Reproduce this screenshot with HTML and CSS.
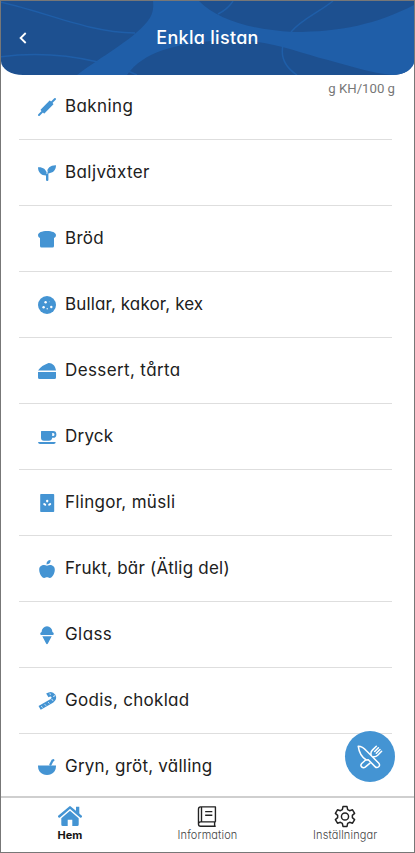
FILE: index.html
```html
<!DOCTYPE html>
<html lang="sv">
<head>
<meta charset="utf-8">
<title>Enkla listan</title>
<link rel="stylesheet" href="styles.css">
</head>
<body>
<div class="app">
  <header class="header">
    <svg class="header-art" viewBox="0 0 413 74" preserveAspectRatio="none" aria-hidden="true">
      <rect width="413" height="74" fill="#1d5090"/>
      <path d="M152 0C153 9 151 15 146 21C130 40 101 55 76 74H126C143 50 174 44 210 40C261 35 292 50 327 59C348 65 371 72 391 74H413V4C376 23 340 31 292 31C248 28 217 19 198 0Z" fill="#1f5ea8"/>
      <path d="M0 1C47 11 86 31 135 32M0 56C36 51 72 55 98 61M128 70L137 74M233 0Q228 8 218 13M333 0C318 12 302 18 291 31M283 44Q279 62 297 74" transform="translate(-1 0)" fill="none" stroke="#1f5ea8" stroke-width="1.5"/>
    </svg>
    <svg class="back" viewBox="0 0 8 12"><path d="M6.7 1L1.6 6L6.7 11" fill="none" stroke="#fff" stroke-width="1.8"/></svg>
    <h1 class="title">Enkla listan</h1>
  </header>
  <main class="list-wrap">
    <span class="unit">g KH/100 g</span>
    <ul class="list">
      <li class="row"><svg class="icon" viewBox="0 0 18 18"><path d="M1 17L17 1" stroke="#4494d3" stroke-width="2" stroke-linecap="round"/><path d="M3.2 11.8L11.8 3.2L14.8 6.2L6.2 14.8Z" stroke="#4494d3" stroke-width="1.2" stroke-linejoin="round"/></svg><span class="label bakning">Bakning</span></li>
      <li class="row"><svg class="icon" viewBox="0 0 18 18"><path d="M0 3.2C5 2.9 8 5.2 8.7 9C9.2 4 12.5 1.1 18 1.3C18 6.2 15.2 9 10.4 9.4V16Q10.4 17 9.2 17Q8 17 8 16V11.5C3.2 11.3 0 8.3 0 3.2Z"/><path d="M8.8 10L9.7 6.5" stroke="#fff" stroke-width=".7"/></svg><span class="label baljvaxter">Baljväxter</span></li>
      <li class="row"><svg class="icon" viewBox="0 0 18 18"><path d="M9 1C14 1 18 2.6 18 5.2Q18 7.4 16 8V16Q16 17.5 14.5 17.5H3.5Q2 17.5 2 16V8Q0 7.4 0 5.2C0 2.6 4 1 9 1Z"/></svg><span class="label brod">Bröd</span></li>
      <li class="row"><svg class="icon" viewBox="0 0 18 18"><circle cx="9" cy="9" r="9"/><g fill="#fff"><circle cx="7.6" cy="6.2" r="1.2"/><circle cx="5.6" cy="11.2" r="1.2"/><circle cx="13.3" cy="11" r="1.2"/><circle cx="11.2" cy="5.8" r=".4"/><circle cx="9.2" cy="12.7" r=".7"/></g></svg><span class="label bullar">Bullar, kakor, kex</span></li>
      <li class="row"><svg class="icon" viewBox="0 0 18 18"><path d="M0 8.6C2.2 5.2 6 2.6 10.6 1C14 .8 17.6 3.7 18 8.6ZM0 10H18V15.5Q18 17 16.5 17H1.5Q0 17 0 15.5Z"/></svg><span class="label dessert">Dessert, tårta</span></li>
      <li class="row"><svg class="icon" viewBox="0 0 18 18"><path fill-rule="evenodd" d="M3.5 3H15A3.4 3.4 0 0 1 15 9.8H14.2Q13.8 12.8 11 12.8H6Q3 12.8 3 9.8V3.5Q3 3 3.5 3ZM14.2 5V8H15A1.5 1.5 0 0 0 15 5ZM0 14H17.7Q17.6 16 15.8 16H2Q.2 16 0 14Z"/></svg><span class="label dryck">Dryck</span></li>
      <li class="row"><svg class="icon" viewBox="0 0 18 18"><rect x="2.2" y="0" width="14" height="18" rx=".8"/><g fill="#fff"><ellipse cx="9.2" cy="7.1" rx="1.2" ry="1.4"/><ellipse cx="6.7" cy="10.4" rx="1.6" ry="1.1" transform="rotate(30 6.7 10.4)"/><ellipse cx="11.7" cy="10.4" rx="1.6" ry="1.1" transform="rotate(-30 11.7 10.4)"/></g></svg><span class="label flingor">Flingor, müsli</span></li>
      <li class="row"><svg class="icon" viewBox="0 0 18 18"><path d="M9 5.8C12.2 4.1 16.8 5.3 16.8 9.7C16.8 13.3 14.2 18 11.8 18C10.6 18 10.1 17.3 9 17.3S7.4 18 6.2 18C3.8 18 1.2 13.3 1.2 9.7C1.2 5.3 5.8 4.1 9 5.8ZM8.5 4.4C8.4 1.5 10 .1 12.6 0C12.8 2.8 11.3 4.4 8.5 4.4Z"/></svg><span class="label frukt">Frukt, bär (Ätlig del)</span></li>
      <li class="row"><svg class="icon" viewBox="0 0 18 18"><path d="M3.6 6A5.4 5.7 0 0 1 14.4 6Q15.8 6.5 15.8 7.8Q15.8 9 14.5 9H3.5Q2.2 9 2.2 7.8Q2.2 6.5 3.6 6ZM4.3 10.2H13.7L9.9 17.5Q9 19 8.1 17.5Z"/></svg><span class="label glass">Glass</span></li>
      <li class="row"><svg class="icon" viewBox="0 0 18 18"><path d="M1.6 15.9L13.8 8.9Q17 6.7 15.3 3.7Q13.4 .9 9.3 3.4" fill="none" stroke="#4494d3" stroke-width="4.4"/><path d="M3.4 14.2L4.4 15.6M6.8 12.3L7.9 13.6M10.2 10.3L11.4 11.4M13.6 7.6L15.2 8.4M15.2 4.5L17 3.7M12.3 2.8L12 1.4" stroke="#fff" stroke-width=".9"/></svg><span class="label godis">Godis, choklad</span></li>
      <li class="row"><svg class="icon" viewBox="0 0 18 18"><path d="M0 7.5H18V8.3C18 12 16 15 12.8 16.3Q11.3 17 9 17T5.2 16.3C2 15 0 12 0 8.3Z"/><path d="M12.5 6.6L14.5 2.6L15.3 2.2" stroke="#4494d3" stroke-width="2.3" stroke-linecap="round"/></svg><span class="label gryn">Gryn, gröt, välling</span></li>
    </ul>
    <button class="fab" aria-label="Mat"><svg viewBox="0 0 26 24" fill="none" stroke="#fff" stroke-width="1.5" stroke-linejoin="round" stroke-linecap="round"><path d="M1.2 1.2C5 1.3 7.5 3.5 9.4 5.7L21.6 18Q23.5 20 21.6 21.8Q19.8 23.4 18 21.6L11.3 14.7L9.3 15Q2.5 11 1.2 1.2Z"/><path d="M14 9.4C13.6 7.4 14.2 6.3 15.4 5.1L19.3 1.2M24.6 6.3L20.7 10.2C19.4 11.5 18.3 12 16.6 11.7M13 18.2L8.2 22.2Q6.4 23.5 4.6 21.9Q3.1 20.3 4.7 18.5L8.6 15M21.4 2.8L17.7 6.5M23 4.5L19.3 8.2"/></svg></button>
  </main>
  <nav class="tabs">
    <a class="tab active"><svg class="tab-icon home" viewBox="0 0 24 22"><path d="M1.2 11L12 1.8L22.8 11" fill="none" stroke="#4494d3" stroke-width="2.4" stroke-linecap="round" stroke-linejoin="round"/><path d="M18 1.2H21.3V9L18 6ZM12 5.3L20.7 12.8V19Q20.7 20.6 19.2 20.6H14.3V14.3H9.7V20.6H4.8Q3.3 20.6 3.3 19V12.8Z" fill="#4494d3"/></svg><span class="tab-label">Hem</span></a>
    <a class="tab info"><svg class="tab-icon" viewBox="0 0 24 24" fill="none" stroke="#222" stroke-width="1.5" stroke-linejoin="round"><path d="M21.5 17.8H5Q2.7 17.8 2.7 20.2Q2.7 22.6 5 22.6H21.5M20.3 18V22.3M21.2 17.8V1.5H5Q2.7 1.5 2.7 4V20.2M6 1.8V17.6M10 6.7H17.8M10 10.7H17.8"/></svg><span class="tab-label">Information</span></a>
    <a class="tab settings"><svg class="tab-icon" viewBox="0 0 24 24" fill="none" stroke="#222" stroke-width="1.6" stroke-linejoin="round"><path d="M9.8 1.2H14.2L14.9 4.5L17 5.7L20.2 4.7L22.5 8.6L20 10.8V13.2L22.5 15.4L20.2 19.3L17 18.3L14.9 19.5L14.2 22.8H9.8L9.1 19.5L7 18.3L3.8 19.3L1.5 15.4L4 13.2V10.8L1.5 8.6L3.8 4.7L7 5.7L9.1 4.5Z"/><circle cx="12" cy="12" r="3.9"/></svg><span class="tab-label">Inställningar</span></a>
  </nav>
</div>
</body>
</html>
```
FILE: styles.css
```css
* { box-sizing: border-box; }
body { margin: 0; background: #fff; }
.app {
  width: 415px; height: 853px;
  border: 1px solid #777;
  display: flex; flex-direction: column;
  overflow: hidden;
  font-family: Inter, "Open Sans", sans-serif;
  font-feature-settings: "cv11";
  color: #202020;
}
.header {
  position: relative; flex: none; height: 74px;
  border-radius: 0 0 22px 22px / 0 0 14px 14px;
  overflow: hidden;
  display: flex; align-items: center; justify-content: center;
}
.header-art { position: absolute; inset: 0; width: 100%; height: 100%; }
.back { position: absolute; left: 18px; top: 31px; width: 8px; height: 12px; }
.title { position: relative; margin: 0; color: #fff; font-size: 18px; line-height: 24px; font-weight: 500; letter-spacing: .3px; white-space: nowrap; }
.list-wrap { position: relative; flex: 1; min-height: 0; }
.unit { position: absolute; right: 19px; top: 6px; font: 13.2px/16px Roboto, sans-serif; color: #777; }
.list { list-style: none; margin: -1px 22px 0 18px; padding: 0; }
.row {
  height: 66px; border-bottom: 1px solid #dedede;
  display: flex; align-items: center; gap: 9px; padding-left: 19px;
}
.row:last-child { border-bottom-color: transparent; }
.icon { width: 18px; height: 18px; flex: none; fill: #4494d3; overflow: visible; }
.label { font-size: 17px; line-height: 24px; white-space: nowrap; margin-top: -2px; letter-spacing: .3px; }
.bakning, .baljvaxter, .glass { letter-spacing: .42px; }
.dessert { letter-spacing: .38px; }
.bullar { letter-spacing: .12px; }
.dryck, .gryn, .frukt { letter-spacing: .23px; }
.fab {
  position: absolute; right: 19px; bottom: 14px;
  width: 50px; height: 51px; border: 0; border-radius: 50%; padding: 0;
  background: #4494d3;
  display: flex; align-items: center; justify-content: center;
}
.fab svg { width: 26px; height: 24px; }
.tabs {
  flex: none; height: 56px; border-top: 2px solid #cfcfcf;
  display: grid; grid-template-columns: repeat(3, 1fr);
}
.tab { display: flex; flex-direction: column; align-items: center; padding-top: 7px; color: #444; }
.tab-icon { width: 22px; height: 23px; flex: none; }
.home { width: 24px; }
.tab-label { font-size: 11px; line-height: 14px; font-weight: 300; letter-spacing: .12px; }
.active .tab-label { font-weight: 700; letter-spacing: 0; color: #151515; }
```
